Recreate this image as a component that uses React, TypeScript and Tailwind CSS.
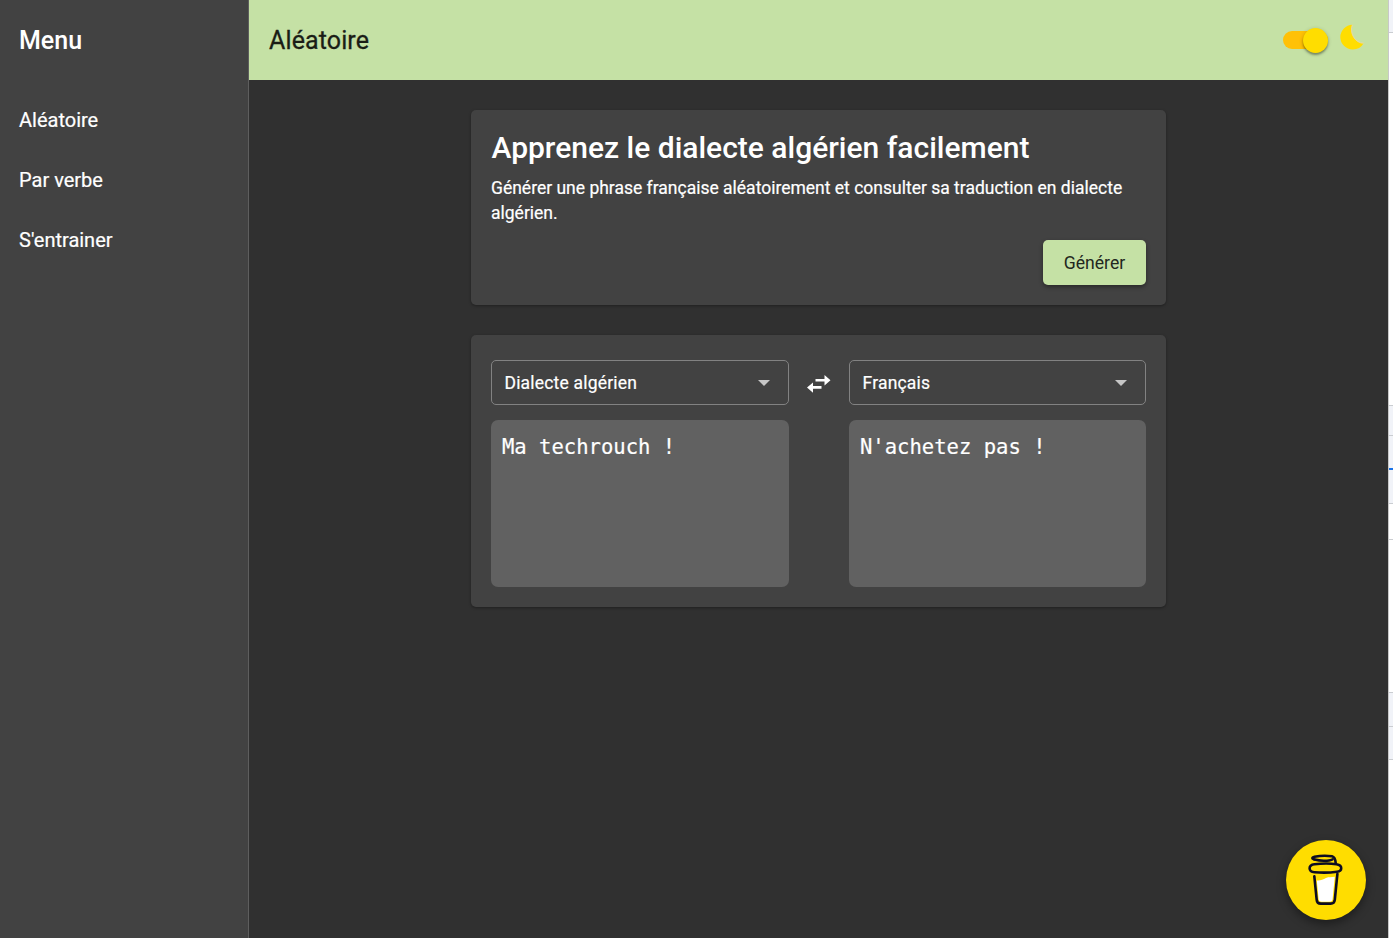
const NAV_ITEMS = ["Aléatoire", "Par verbe", "S'entrainer"];

function Select({ label }: { label: string }) {
  return (
    <button className="flex h-[45px] w-full items-center justify-between rounded-[5px] border border-[#828282] pr-[18px] pl-[12.5px] text-[17.5px] tracking-[0.19px] text-white [-webkit-text-stroke:0.2px_#fff]">
      <span className="pt-[2px]">{label}</span>
      <svg className="h-[6px] w-[12px]" viewBox="0 0 12 6">
        <path d="M0 0h12L6 6z" fill="#c6c6c6" />
      </svg>
    </button>
  );
}

function Phrase({ text }: { text: string }) {
  return (
    <div className="mt-[15px] h-[167px] rounded-[7px] bg-[#616161] px-[11px] pt-[14px] font-['DejaVu_Sans_Mono',monospace] text-[20.55px] leading-[27px] text-white [-webkit-text-stroke:0.2px_#fff]">
      {text}
    </div>
  );
}

function CoffeeCup() {
  return (
    <svg className="h-[60px] w-[46px]" viewBox="0 0 46 60" fill="none">
      <path
        d="M13.8 30.5C17 31 20 29.5 23 28C26 26.8 28 27.5 31.8 26.8L29.6 49Q29.3 51.8 26.5 51.8H18.6Q15.9 51.8 15.6 49Z"
        fill="#fff"
      />
      <g stroke="#0d0c22" strokeWidth="2.6" strokeLinecap="round" strokeLinejoin="round">
        <path d="M11.3 26.2L13.7 49.8Q14 53.6 17.7 53.6H27.7Q31.3 53.6 31.8 49.8L34.4 23.8" />
        <path d="M11.5 14.3Q23 12.7 33.5 14.2Q38.4 15 38.2 18.2Q38.2 21.3 34 21.8Q23 23.3 11.5 22.2Q6.7 22 6.6 18.2Q6.6 14.9 11.5 14.3Z" />
        <path d="M11.2 9.4Q7.2 8 11.5 6.8Q20.5 5 29 6.3Q32.3 7.1 32.7 13.2" />
        <path d="M11.8 9.6Q17 11.2 24 10.7Q28.5 10.4 29.5 9.4" />
      </g>
    </svg>
  );
}

export default function App() {
  return (
    <div className="flex h-[938px] w-[1393px] overflow-hidden bg-[#303030] font-[Roboto,sans-serif] text-white">
      <aside className="w-[249px] shrink-0 border-r border-[#5e5e5e] bg-[#424242] pl-[19px]">
        <h2 className="flex h-20 items-center pt-[2px] text-[25px] font-medium">Menu</h2>
        <nav className="mt-[10px]">
          {NAV_ITEMS.map((item) => (
            <a key={item} className="flex h-[60px] items-center text-[20px] [-webkit-text-stroke:0.2px_#fff]">
              {item}
            </a>
          ))}
        </nav>
      </aside>

      <div className="relative w-[1139px] shrink-0">
        <header className="flex h-20 items-center justify-between bg-[#c5e1a5] pr-[22px] pl-5">
          <h1 className="pt-[2px] text-[25px] font-normal tracking-[0.12px] text-[#1a1d16] [-webkit-text-stroke:0.3px_#1a1d16]">Aléatoire</h1>
          <div className="flex items-center">
            <div className="flex h-[18px] w-[45px] items-center justify-end rounded-full bg-[#ffc107]">
              <span className="size-[25px] rounded-full bg-[#ffdd00] shadow-[0_2px_2px_rgba(0,0,0,0.3),0_1px_4px_rgba(0,0,0,0.2)]" />
            </div>
            <svg className="mb-[6px] ml-[12px] h-[26px] w-[26px]" viewBox="0 0 26 26">
              <path
                d="M12.4 .7A12.4 12.4 0 0 0 .3 13A12.4 12.4 0 0 0 12.7 25.4A12.4 12.4 0 0 0 23.6 19.2C15 19.4 9 8.4 12.4 .7Z"
                fill="#ffdd00"
              />
              <path d="M12.4 .7C9 8.4 15 19.4 23.6 19.2" fill="none" stroke="#ead7a6" strokeWidth=".9" />
            </svg>
          </div>
        </header>

        <main className="ml-[222px] w-[695px] pt-[30px]">
          <section className="h-[195px] rounded-[5px] bg-[#424242] px-5 pt-5 shadow-[0_1px_3px_rgba(0,0,0,0.35)]">
            <h2 className="pl-[0.5px] text-[30px] leading-[36px] font-medium whitespace-nowrap">
              Apprenez le dialecte algérien facilement
            </h2>
            <p className="mt-[10px] text-[17.5px] leading-[25px] [-webkit-text-stroke:0.2px_#fff]">
              Générer une phrase française aléatoirement et consulter sa traduction en dialecte
              <br />
              algérien.
            </p>
            <div className="mt-[14px] flex justify-end">
              <button className="h-[45px] w-[103px] rounded-[5px] bg-[#c5e1a5] pt-[2px] text-[17.6px] text-[#222720] shadow-[0_2px_4px_rgba(0,0,0,0.4)]">
                Générer
              </button>
            </div>
          </section>

          <section className="mt-[30px] flex h-[272px] rounded-[5px] bg-[#424242] px-5 pt-[25px] shadow-[0_1px_3px_rgba(0,0,0,0.35)]">
            <div className="w-[298px]">
              <Select label="Dialecte algérien" />
              <Phrase text="Ma techrouch !" />
            </div>
            <div className="flex h-[48px] w-[60px] items-center justify-center">
              <svg className="h-[18px] w-6" viewBox="0 0 24 18" fill="#fff">
                <path d="M17.5 0L23.5 5.2L17.5 10.4V6.6H8.5V3.9H17.5ZM6 7.4V11.1H14.5V13.8H6V17.8L0 12.5Z" />
              </svg>
            </div>
            <div className="w-[297px]">
              <Select label="Français" />
              <Phrase text="N'achetez pas !" />
            </div>
          </section>
        </main>

        <button className="absolute right-[22px] bottom-[18px] flex size-20 items-center justify-center rounded-full bg-[#ffdd00] shadow-[0_4px_10px_rgba(0,0,0,0.4)]">
          <CoffeeCup />
        </button>
      </div>

      <div className="flex w-[5px] shrink-0 flex-col border-l border-[#c8c8c8] bg-white">
        <div className="h-[33px] shrink-0 border-b border-[#cacdd1] bg-[#f1f3f8]" />
        <div className="h-[373px] shrink-0 border-b border-[#cacdd1]" />
        <div className="h-[30px] shrink-0 border-b border-[#cacdd1] bg-[#f1f3f8]" />
        <div className="h-[34px] shrink-0 border-b-2 border-[#1a73e8] bg-[#f1f3f8]" />
        <div className="h-[34px] shrink-0 border-b border-[#cacdd1] bg-[#f1f3f8]" />
        <div className="h-[36px] shrink-0 border-b border-[#cacdd1]" />
        <div className="h-[153px] shrink-0 border-b border-[#cacdd1]" />
        <div className="h-[34px] shrink-0 border-b border-[#cacdd1] bg-[#f1f3f8]" />
        <div className="h-[33px] shrink-0 border-b border-[#cacdd1] bg-[#f1f3f8]" />
      </div>
    </div>
  );
}
